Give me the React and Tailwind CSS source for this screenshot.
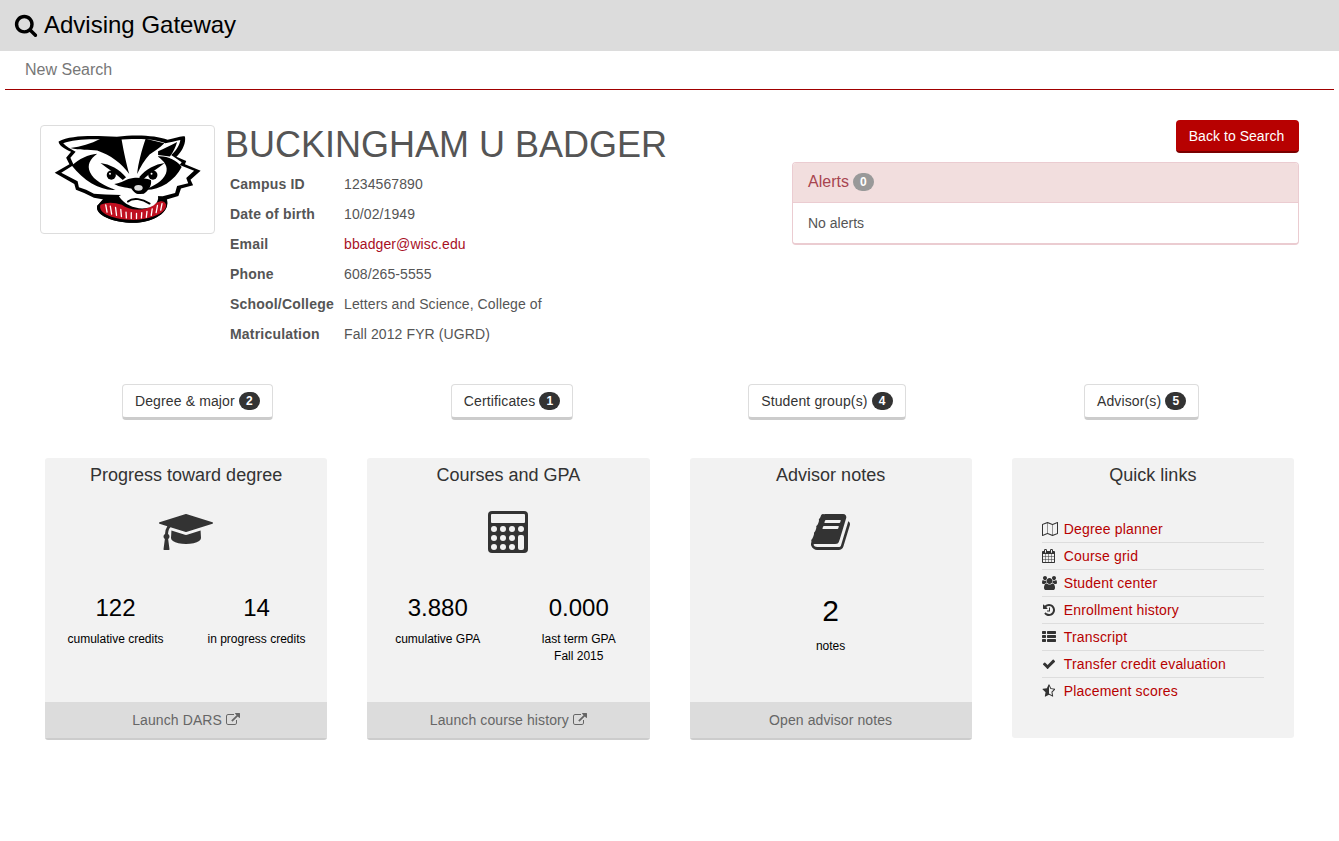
import React from 'react';

const FONT = 'font-["Liberation_Sans",Arial,sans-serif]';

// Font Awesome 4 glyphs, react-icons only ships the newer redraws
const FA4 = {
  search: [1792, 'M1216 832q0-185-131.5-316.5t-316.5-131.5-316.5 131.5-131.5 316.5 131.5 316.5 316.5 131.5 316.5-131.5 131.5-316.5zm512 832q0 52-38 90t-90 38q-54 0-90-38l-343-342q-179 124-399 124-143 0-273.5-55.5t-225-150-150-225-55.5-273.5 55.5-273.5 150-225 225-150 273.5-55.5 273.5 55.5 225 150 150 225 55.5 273.5q0 220-124 399l343 343q37 37 37 90z'],
  cap: [2304, 'M1774 836l18 316q4 69-82 128t-235 93.5-323 34.5-323-34.5-235-93.5-82-128l18-316 574 181q22 7 48 7t48-7zm530-324q0 23-22 31l-1120 352q-4 1-10 1t-10-1l-652-206q-43 34-71 111.5t-34 178.5q63 36 63 109 0 69-58 107l58 433q2 14-8 25-9 11-24 11h-192q-15 0-24-11-10-11-8-25l58-433q-58-38-58-107 0-73 65-111 11-207 98-330l-333-104q-22-8-22-31t22-31l1120-352q4-1 10-1t10 1l1120 352q22 8 22 31z'],
  book: [1792, 'M1639 478q40 57 18 129l-275 906q-19 64-76.5 107.5t-122.5 43.5h-923q-77 0-148.5-53.5t-99.5-131.5q-24-67-2-127 0-4 3-27t4-37q1-8-3-21.5t-3-19.5q2-11 8-21t16.5-23.5 16.5-23.5q23-38 45-91.5t30-91.5q3-10 .5-30t-.5-28q3-11 17-28t17-23q21-36 42-92t25-90q1-9-2.5-32t.5-28q4-13 22-30.5t22-22.5q19-26 42.5-84.5t27.5-96.5q1-8-3-25.5t-2-26.5q2-8 9-18t18-23 17-21q8-12 16.5-30.5t15-35 16-36 19.5-32 26.5-23.5 36-11.5 47.5 5.5l-1 3q38-9 51-9h761q74 0 114 56t18 130l-274 906q-36 119-71.5 153.5t-128.5 34.5h-869q-27 0-38 15-11 16-1 43 24 70 144 70h923q29 0 56-15.5t35-41.5l300-987q7-22 5-57 38 15 59 43zm-1064 2q-4 13 2 22.5t20 9.5h608q13 0 25.5-9.5t16.5-22.5l21-64q4-13-2-22.5t-20-9.5h-608q-13 0-25.5 9.5t-16.5 22.5zm-83 256q-4 13 2 22.5t20 9.5h608q13 0 25.5-9.5t16.5-22.5l21-64q4-13-2-22.5t-20-9.5h-608q-13 0-25.5 9.5t-16.5 22.5z'],
  external: [1792, 'M1408 928v320q0 119-84.5 203.5t-203.5 84.5h-832q-119 0-203.5-84.5t-84.5-203.5v-832q0-119 84.5-203.5t203.5-84.5h704q14 0 23 9t9 23v64q0 14-9 23t-23 9h-704q-66 0-113 47t-47 113v832q0 66 47 113t113 47h832q66 0 113-47t47-113v-320q0-14 9-23t23-9h64q14 0 23 9t9 23zm384-864v512q0 26-19 45t-45 19-45-19l-176-176-652 652q-10 10-23 10t-23-10l-114-114q-10-10-10-23t10-23l652-652-176-176q-19-19-19-45t19-45 45-19h512q26 0 45 19t19 45z'],
  map: [2048, 'M2020 11q28 20 28 53v1408q0 20-11 36t-29 23l-640 256q-24 11-48 0l-616-246-616 246q-10 5-24 5-19 0-36-11-28-20-28-53v-1408q0-20 11-36t29-23l640-256q24-11 48 0l616 246 616-246q32-13 60 6zm-1284 135v1270l576 230v-1270zm-608 217v1270l544-217v-1270zm1792 1066v-1270l-544 217v1270z'],
  calendar: [1664, 'M128 1664h288v-288h-288v288zm352 0h320v-288h-320v288zm-352-352h288v-320h-288v320zm352 0h320v-320h-320v320zm-352-384h288v-288h-288v288zm736 736h320v-288h-320v288zm-384-736h320v-288h-320v288zm768 736h288v-288h-288v288zm-384-352h320v-320h-320v320zm-352-864v-288q0-13-9.5-22.5t-22.5-9.5h-64q-13 0-22.5 9.5t-9.5 22.5v288q0 13 9.5 22.5t22.5 9.5h64q13 0 22.5-9.5t9.5-22.5zm736 864h288v-320h-288v320zm-384-384h320v-288h-320v288zm384 0h288v-288h-288v288zm32-480v-288q0-13-9.5-22.5t-22.5-9.5h-64q-13 0-22.5 9.5t-9.5 22.5v288q0 13 9.5 22.5t22.5 9.5h64q13 0 22.5-9.5t9.5-22.5zm384-64v1280q0 52-38 90t-90 38h-1408q-52 0-90-38t-38-90v-1280q0-52 38-90t90-38h128v-96q0-66 47-113t113-47h64q66 0 113 47t47 113v96h384v-96q0-66 47-113t113-47h64q66 0 113 47t47 113v96h128q52 0 90 38t38 90z'],
  users: [1920, 'M593 896q-162 5-265 128h-134q-82 0-138-40.5t-56-118.5q0-353 124-353 6 0 43.5 21t97.5 42.5 119 21.5q67 0 133-23-5 37-5 66 0 139 81 256zm1071 637q0 120-73 189.5t-194 69.5h-874q-121 0-194-69.5t-73-189.5q0-53 3.5-103.5t14-109 26.5-108.5 43-97.5 62-81 85.5-53.5 111.5-20q10 0 43 21.5t73 48 107 48 135 21.5 135-21.5 107-48 73-48 43-21.5q61 0 111.5 20t85.5 53.5 62 81 43 97.5 26.5 108.5 14 109 3.5 103.5zm-1024-1277q0 106-75 181t-181 75-181-75-75-181 75-181 181-75 181 75 75 181zm704 384q0 159-112.5 271.5t-271.5 112.5-271.5-112.5-112.5-271.5 112.5-271.5 271.5-112.5 271.5 112.5 112.5 271.5zm576 225q0 78-56 118.5t-138 40.5h-134q-103-123-265-128 81-117 81-256 0-29-5-66 66 23 133 23 59 0 119-21.5t97.5-42.5 43.5-21q124 0 124 353zm-128-609q0 106-75 181t-181 75-181-75-75-181 75-181 181-75 181 75 75 181z'],
  history: [1664, 'M1664 896q0 156-61 298t-164 245-245 164-298 61q-172 0-327-72.5t-264-204.5q-7-10-6.5-22.5t8.5-20.5l137-138q10-9 25-9 16 2 23 12 73 95 179 147t225 52q104 0 198.5-40.5t163.5-109.5 109.5-163.5 40.5-198.5-40.5-198.5-109.5-163.5-163.5-109.5-198.5-40.5q-98 0-188 35.5t-160 101.5l137 138q31 30 14 69-17 40-59 40h-448q-26 0-45-19t-19-45v-448q0-42 40-59 39-17 69 14l130 129q107-101 244.5-156.5t284.5-55.5q156 0 298 61t245 164 164 245 61 298zm-640-288v448q0 14-9 23t-23 9h-320q-14 0-23-9t-9-23v-64q0-14 9-23t23-9h224v-352q0-14 9-23t23-9h64q14 0 23 9t9 23z'],
  list: [1792, 'M512 1248v192q0 40-28 68t-68 28h-320q-40 0-68-28t-28-68v-192q0-40 28-68t68-28h320q40 0 68 28t28 68zm0-512v192q0 40-28 68t-68 28h-320q-40 0-68-28t-28-68v-192q0-40 28-68t68-28h320q40 0 68 28t28 68zm1280 512v192q0 40-28 68t-68 28h-960q-40 0-68-28t-28-68v-192q0-40 28-68t68-28h960q40 0 68 28t28 68zm-1280-1024v192q0 40-28 68t-68 28h-320q-40 0-68-28t-28-68v-192q0-40 28-68t68-28h320q40 0 68 28t28 68zm1280 512v192q0 40-28 68t-68 28h-960q-40 0-68-28t-28-68v-192q0-40 28-68t68-28h960q40 0 68 28t28 68zm0-512v192q0 40-28 68t-68 28h-960q-40 0-68-28t-28-68v-192q0-40 28-68t68-28h960q40 0 68 28t28 68z'],
  check: [1792, 'M1671 566q0 40-28 68l-724 724-136 136q-28 28-68 28t-68-28l-136-136-362-362q-28-28-28-68t28-68l136-136q28-28 68-28t68 28l294 295 656-657q28-28 68-28t68 28l136 136q28 28 28 68z'],
  star: [1664, 'M1250 957l257-250-356-52-66-10-30-60-159-322v963l59 31 318 168-60-355-12-66zm452-262l-363 354 86 500q5 33-6 51.5t-34 18.5q-17 0-40-12l-449-236-449 236q-23 12-40 12-23 0-34-18.5t-6-51.5l86-500-364-354q-32-32-23-59.5t54-34.5l502-73 225-455q20-41 49-41 28 0 49 41l225 455 502 73q45 7 54 34.5t-24 59.5z'],
};

const Fa = ({ name, size }) => {
  const [width, d] = FA4[name];
  return (
    <svg viewBox={`0 0 ${width} 1792`} height={size} width={(width / 1792) * size} fill="currentColor" className="shrink-0">
      <path d={d} />
    </svg>
  );
};

const profileRows = [
  ['Campus ID', '1234567890'],
  ['Date of birth', '10/02/1949'],
  ['Email', 'bbadger@wisc.edu', true],
  ['Phone', '608/265-5555'],
  ['School/College', 'Letters and Science, College of'],
  ['Matriculation', 'Fall 2012 FYR (UGRD)'],
];

const pills = [
  ['Degree & major', 2],
  ['Certificates', 1],
  ['Student group(s)', 4],
  ['Advisor(s)', 5],
];

const quickLinks = [
  ['Degree planner', 'map'],
  ['Course grid', 'calendar'],
  ['Student center', 'users'],
  ['Enrollment history', 'history'],
  ['Transcript', 'list'],
  ['Transfer credit evaluation', 'check'],
  ['Placement scores', 'star'],
];

// hand drawn mascot, coordinates are 3x the page pixels from (50,128)
const BadgerLogo = () => (
  <svg viewBox="-30 -9 525 327" className="block w-full h-full blur-[0.4px]">
    <path
      fill="#000"
      d="M22 38C60 18 130 20 200 24C260 16 320 20 355 33C375 30 395 20 408 23C412 45 398 70 382 85L412 98L408 108L456 128L425 155L433 172L396 182L388 205L352 216C366 255 310 287 250 287C190 287 132 264 140 235L160 216L130 210L100 196L75 186L70 168L10 134L55 108L45 88L60 70C40 60 22 50 22 38Z"
    />
    <path
      fill="#fff"
      d="M36 44C70 30 130 30 200 34C260 28 320 30 348 44C362 42 380 36 394 34C392 50 380 68 366 80L398 102L392 110L436 128L412 150L418 166L384 174L378 196L340 206L165 200L130 198L106 186L84 178L80 160L30 134L68 110L58 88L74 70C60 62 44 54 36 44Z"
    />
    <path fill="#000" d="M58 58C90 54 120 46 150 30L214 30C222 75 230 110 238 138C215 105 180 80 140 66C115 62 85 66 58 58Z" />
    <path fill="#000" d="M288 30L345 44C330 60 312 70 300 78C285 95 272 115 262 138C265 105 276 65 288 30Z" />
    <path fill="#000" d="M326 68C345 60 362 52 384 40C380 55 372 72 362 84L326 80Z" />
    <path fill="#000" d="M62 112C85 92 112 78 140 76C118 92 108 110 118 132C130 158 160 172 196 186C150 190 100 160 62 112Z" />
    <path fill="#000" d="M398 116C382 96 355 82 325 84C345 98 358 115 350 136C340 160 315 172 286 186C330 188 375 160 398 116Z" />
    <path fill="#000" d="M150 104C178 108 208 122 228 148L218 156C198 136 172 122 150 104Z" />
    <path fill="#000" d="M346 104C318 108 288 122 268 148L278 156C298 136 324 122 346 104Z" />
    <circle cx="183" cy="141" r="14" fill="#000" />
    <circle cx="310" cy="141" r="14" fill="#000" />
    <circle cx="179" cy="137" r="3" fill="#fff" />
    <circle cx="306" cy="137" r="3" fill="#fff" />
    <path fill="#000" d="M192 168C215 166 228 152 250 150C270 148 290 152 304 156C308 172 296 190 280 200C262 206 250 190 244 182C228 178 208 178 192 168Z" />
    <ellipse cx="266" cy="180" rx="13" ry="9" fill="#ddd" />
    <path fill="#000" d="M140 235L160 212L200 214L250 240L310 230L352 212C366 255 310 287 250 287C190 287 132 264 140 235Z" />
    <path
      fill="#c01020"
      d="M150 232C170 222 192 224 215 232C240 252 292 252 320 226C335 218 346 220 350 230C356 255 305 277 250 278C190 278 140 258 150 232Z"
    />
    <path
      fill="#fff"
      d="M206 206C222 196 240 192 258 198C280 200 305 196 322 196C330 210 328 228 304 238C275 250 228 240 206 206Z"
    />
    <path fill="none" stroke="#000" strokeWidth="6" strokeLinecap="round" d="M234 222C250 208 278 214 300 228" />
    <path
      fill="none"
      stroke="#fff"
      strokeWidth="4"
      strokeLinecap="round"
      d="M166 232L170 254M180 236L184 260M196 240L199 264M212 246L214 268M228 254L229 272M244 256L244 274M260 258L260 274M276 256L275 272M292 252L290 270M308 244L305 264M324 234L320 256M338 228L334 248"
    />
  </svg>
);

// calculator glyph drawn to the measured 40x42 box
const Calculator = () => (
  <svg viewBox="0 0 40 42" width="40" height="42" className="shrink-0">
    <rect width="40" height="42" rx="4" fill="#333" />
    <rect x="3" y="3" width="34" height="9" rx="1" fill="#f2f2f2" />
    {[6, 15, 24, 33].map((x) => <circle key={x} cx={x} cy="18" r="3" fill="#f2f2f2" />)}
    {[6, 15, 24].map((x) => <circle key={x} cx={x} cy="27" r="3" fill="#f2f2f2" />)}
    {[6, 15, 24].map((x) => <circle key={x} cx={x} cy="36" r="3" fill="#f2f2f2" />)}
    <rect x="30" y="24" width="6" height="15" rx="2" fill="#f2f2f2" />
  </svg>
);

const Pill = ({ label, count }) => (
  <div className="flex justify-center">
    <button
      type="button"
      className="flex items-center h-[36px] px-3 bg-white border border-[#ddd] border-b-[3px] border-b-[#ccc] rounded text-sm tracking-[0.13px] text-[#333]"
    >
      {label}
      <span className="ml-1 w-[21px] h-[18px] rounded-full bg-[#333] text-white text-xs font-bold tracking-normal flex items-center justify-center">
        {count}
      </span>
    </button>
  </div>
);

const Stat = ({ value, label, sub }) => (
  <div className="w-[141px] text-center text-black">
    <div className="text-2xl leading-[26px]">{value}</div>
    <div className="mt-[10px] text-xs leading-[17px]">{label}</div>
    {sub && <div className="text-xs leading-[17px]">{sub}</div>}
  </div>
);

const Card = ({ title, icon, children, footer }) => (
  <div className="mx-5 h-[282px] flex flex-col bg-[#f2f2f2] rounded-[3px] border-b-2 border-b-[#ccc] overflow-hidden">
    <h3 className="pt-[6px] text-lg leading-[22px] text-center text-[#333]">{title}</h3>
    <div className="mt-[18px] h-[56px] flex items-center justify-center text-[#333]">{icon}</div>
    <div className="flex-1">{children}</div>
    <div className="h-[36px] bg-[#dcdcdc] flex items-center justify-center text-sm tracking-[0.1px] text-[#666]">
      {footer}
    </div>
  </div>
);

const App = () => (
  <div className={`${FONT} min-h-[841px] bg-white`}>
    <header className="h-[51px] bg-[#dcdcdc] flex items-center pl-[14px] pb-[2px] text-black text-2xl">
      <Fa name="search" size={24} />
      <span className="ml-[6px]">Advising Gateway</span>
    </header>
    <nav className="mx-[5px] h-[39px] border-b border-b-[#a00000] pl-5 pt-[8px] text-base leading-[22px] text-[#777]">
      New Search
    </nav>

    <section className="flex justify-between pl-10 pr-10 pt-[30px] h-[294px]">
      <div className="flex">
        <div className="w-[175px] h-[109px] mt-[5px] border border-[#ddd] rounded bg-white overflow-hidden">
          <BadgerLogo />
        </div>
        <div className="ml-[10px]">
          <h1 className="text-4xl leading-[40px] mt-[5px] text-[#555]">BUCKINGHAM U BADGER</h1>
          <div className="mt-[4px] pl-[5px] text-sm text-[#555] tracking-[0.1px]">
            {profileRows.map(([label, value, isLink]) => (
              <div key={label} className="flex h-[30px] items-center">
                <span className="w-[114px] font-bold tracking-[0.2px]">{label}</span>
                <span className={isLink ? 'text-[#a8101f]' : ''}>{value}</span>
              </div>
            ))}
          </div>
        </div>
      </div>
      <div className="w-[507px] flex flex-col items-end">
        <button
          type="button"
          className="w-[123px] h-[33px] pr-[2px] bg-[#b70101] border-b-2 border-b-[#7a0000] rounded text-white text-sm tracking-[0.05px]"
        >
          Back to Search
        </button>
        <div className="w-full mt-[9px] border border-[#ebccd1] border-b-2 rounded overflow-hidden">
          <div className="h-[40px] pl-[15px] pb-[2px] bg-[#f2dede] border-b border-b-[#ebccd1] flex items-center text-base text-[#a8454f]">
            Alerts
            <span className="ml-1 w-[21px] h-[18px] rounded-full bg-[#999] text-white text-xs font-bold flex items-center justify-center">
              0
            </span>
          </div>
          <div className="h-[40px] pl-[15px] flex items-center text-sm text-[#555]">No alerts</div>
        </div>
      </div>
    </section>

    <section className="grid grid-cols-4 px-10">
      {pills.map(([label, count]) => (
        <Pill key={label} label={label} count={count} />
      ))}
    </section>

    <section className="grid grid-cols-4 px-[25px] mt-[38px]">
      <Card
        title="Progress toward degree"
        icon={<Fa name="cap" size={42} />}
        footer={(
          <>
            Launch DARS
            <span className="ml-1"><Fa name="external" size={14} /></span>
          </>
        )}
      >
        <div className="flex mt-[35px]">
          <Stat value="122" label="cumulative credits" />
          <Stat value="14" label="in progress credits" />
        </div>
      </Card>
      <Card
        title="Courses and GPA"
        icon={<Calculator />}
        footer={(
          <>
            Launch course history
            <span className="ml-1"><Fa name="external" size={14} /></span>
          </>
        )}
      >
        <div className="flex mt-[35px]">
          <Stat value="3.880" label="cumulative GPA" />
          <Stat value="0.000" label="last term GPA" sub="Fall 2015" />
        </div>
      </Card>
      <Card
        title="Advisor notes"
        icon={<span className="pl-[2px]"><Fa name="book" size={42} /></span>}
        footer="Open advisor notes"
      >
        <div className="mt-[33px] text-center text-black">
          <div className="text-3xl leading-[36px]">2</div>
          <div className="mt-[9px] text-xs leading-[17px]">notes</div>
        </div>
      </Card>
      <div className="mx-5 h-[280px] bg-[#f2f2f2] rounded-[3px]">
        <h3 className="pt-[6px] text-lg leading-[22px] text-center text-[#333]">Quick links</h3>
        <ul className="mt-[30px] mx-[30px]">
          {quickLinks.map(([label, icon], index) => (
            <li
              key={label}
              className={`flex items-center h-[27px] border-b text-sm tracking-[0.18px] text-[#b70101] ${index < 6 ? 'border-b-[#ddd]' : 'border-b-transparent'}`}
            >
              <span className="w-[22px] text-[#333]"><Fa name={icon} size={14} /></span>
              {label}
            </li>
          ))}
        </ul>
      </div>
    </section>
  </div>
);

export default App;
